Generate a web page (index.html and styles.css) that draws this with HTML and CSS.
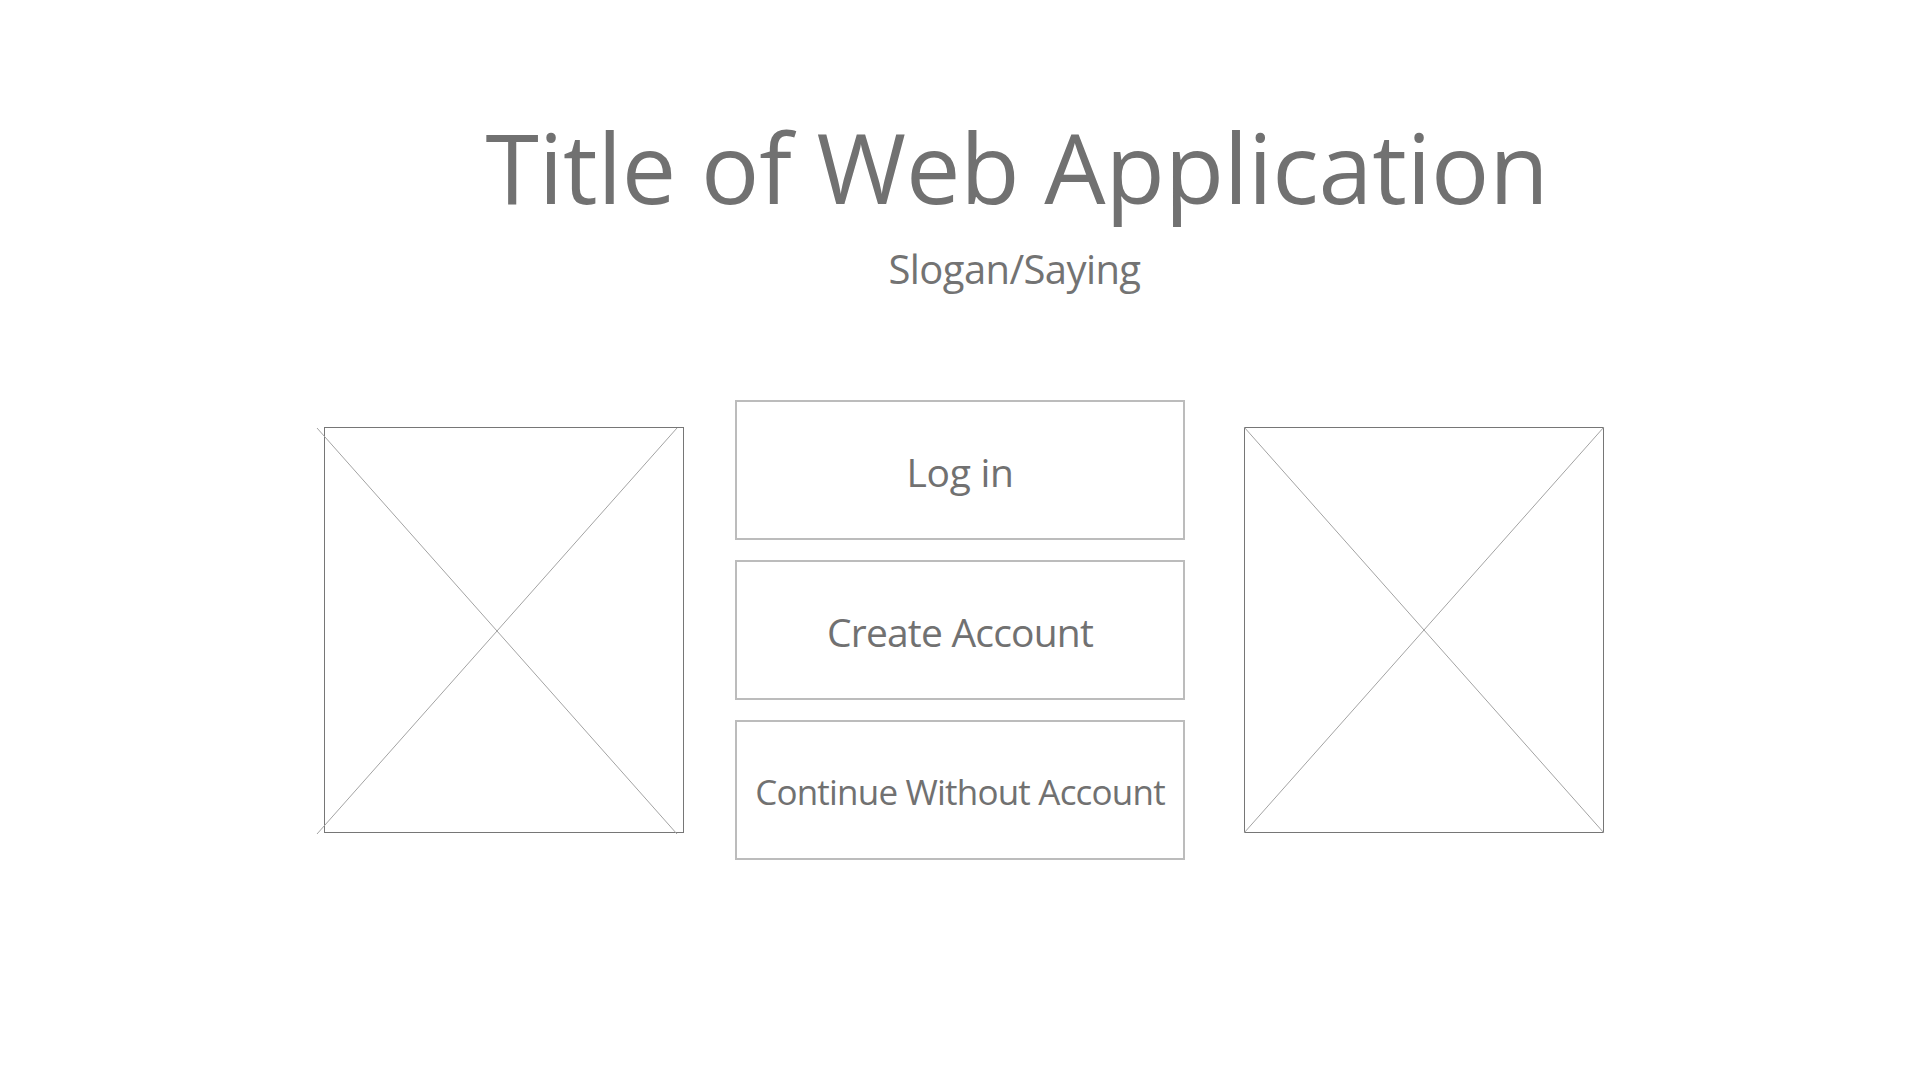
FILE: index.html
```html
<!DOCTYPE html>
<html lang="en">
<head>
<meta charset="utf-8">
<title>Title of Web Application</title>
<link rel="stylesheet" href="styles.css">
</head>
<body>
<header class="hero">
  <h1 class="title">Title of Web Application</h1>
  <p class="slogan">Slogan/Saying</p>
</header>
<main class="row">
  <div class="placeholder placeholder-left">
    <svg class="cross" width="360" height="406" viewBox="0 0 360 406">
      <line x1="0" y1="0" x2="360" y2="406"/>
      <line x1="360" y1="0" x2="0" y2="406"/>
    </svg>
  </div>
  <div class="actions">
    <button class="action action-login">Log in</button>
    <button class="action">Create Account</button>
    <button class="action action-small">Continue Without Account</button>
  </div>
  <div class="placeholder placeholder-right">
    <svg class="cross" width="360" height="406" viewBox="0 0 360 406">
      <line x1="0" y1="0" x2="360" y2="406"/>
      <line x1="360" y1="0" x2="0" y2="406"/>
    </svg>
  </div>
</main>
</body>
</html>
```
FILE: styles.css
```css
html, body {
  margin: 0;
  padding: 0;
  background: #ffffff;
}

body {
  font-family: "Open Sans", "Noto Sans", sans-serif;
  color: #717171;
  width: 1920px;
  height: 1080px;
  overflow: hidden;
}

.hero {
  padding-top: 118px;
  padding-left: 114px;
  display: flex;
  flex-direction: column;
  align-items: center;
}

.title {
  margin: 0;
  font-size: 97px;
  font-weight: 400;
  line-height: 1;
  letter-spacing: -0.2px;
  color: #717171;
}

.slogan {
  margin: 34px 0 0 -5px;
  font-size: 40px;
  line-height: 1;
  letter-spacing: -0.6px;
  color: #737373;
}

.row {
  margin-top: 111px;
  padding-left: 324px;
  display: flex;
  align-items: center;
}

.placeholder {
  position: relative;
  box-sizing: border-box;
  width: 360px;
  height: 406px;
  border: 1px solid #767676;
  flex: none;
}

.cross {
  position: absolute;
  overflow: visible;
}

.cross line {
  stroke: #a3a3a3;
  stroke-width: 1;
}

.placeholder-left .cross {
  left: -8px;
  top: 0;
}

.placeholder-right .cross {
  left: -1px;
  top: -1px;
}

.actions {
  margin: 0 59px 0 51px;
  display: flex;
  flex-direction: column;
  gap: 20px;
}

.action {
  box-sizing: border-box;
  width: 450px;
  height: 140px;
  border: 2px solid #bcbcbc;
  background: #ffffff;
  border-radius: 0;
  padding: 2px 0 0;
  display: flex;
  align-items: center;
  justify-content: center;
  font-family: "Open Sans", "Noto Sans", sans-serif;
  font-size: 39px;
  line-height: 1;
  letter-spacing: -0.8px;
  color: #717171;
}

.action-login {
  letter-spacing: -0.3px;
}

.action-small {
  font-size: 35px;
  letter-spacing: -0.8px;
}
```
